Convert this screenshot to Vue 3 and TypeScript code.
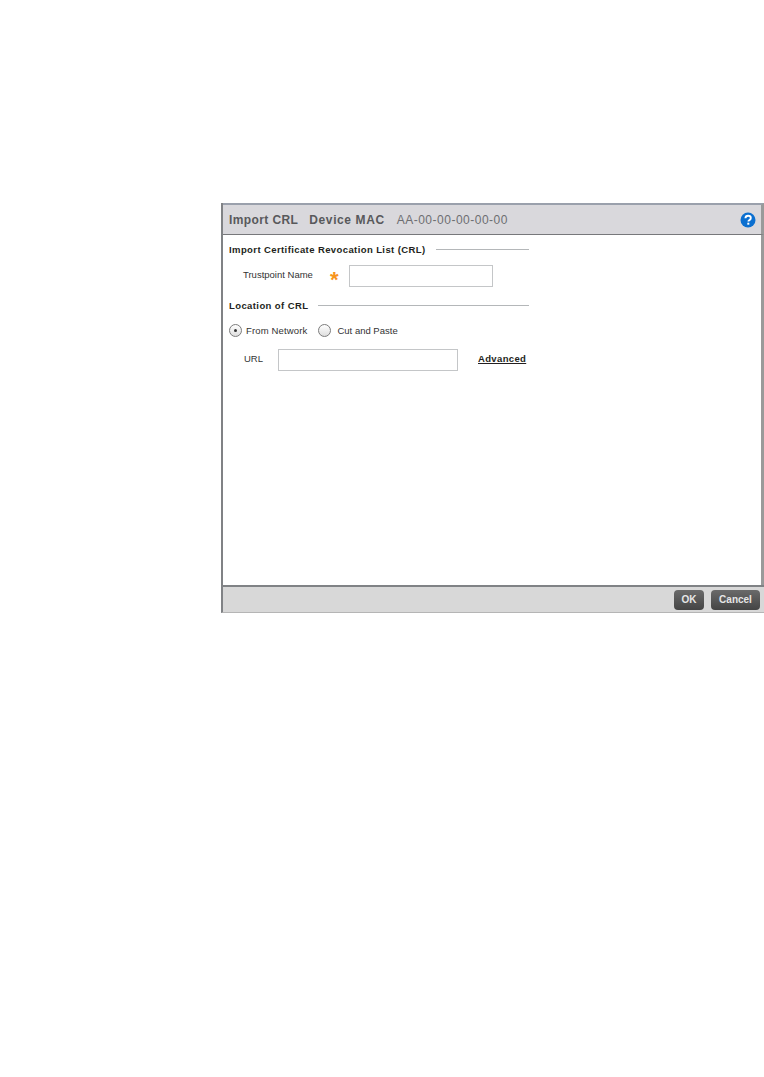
<template>
  <div class="page">
    <div class="dialog">
      <div class="dialog-header">
        <span class="title title-import">Import CRL</span>
        <span class="title title-device">Device MAC</span>
        <span class="mac">AA-00-00-00-00-00</span>
        <svg class="help" width="16" height="16" viewBox="0 0 16 16">
          <circle cx="8" cy="8" r="7.5" fill="#0b6fd0" />
          <path d="M5.4 6.2C5.5 4.6 6.6 3.7 8.1 3.7c1.6 0 2.7.9 2.7 2.2 0 1-.5 1.6-1.4 2.2-.7.4-1 .8-1 1.5" fill="none" stroke="#fff" stroke-width="1.9" />
          <rect x="7.3" y="10.7" width="2" height="2" fill="#fff" />
        </svg>
      </div>
      <div class="dialog-body">
        <div class="section-title section-first">
          <span>Import Certificate Revocation List (CRL)</span>
          <i class="rule"></i>
        </div>
        <div class="row row-trust">
          <label class="trust-label">Trustpoint Name</label>
          <span class="star">*</span>
          <input class="field field-trust" type="text" />
        </div>
        <div class="section-title section-second">
          <span>Location of CRL</span>
          <i class="rule"></i>
        </div>
        <div class="radios">
          <span class="radio checked"></span>
          <span class="radio-label label-network">From Network</span>
          <span class="radio"></span>
          <span class="radio-label">Cut and Paste</span>
        </div>
        <div class="row row-url">
          <label class="url-label">URL</label>
          <input class="field field-url" type="text" />
          <a class="advanced">Advanced</a>
        </div>
      </div>
      <div class="dialog-footer">
        <button class="btn btn-ok">OK</button>
        <button class="btn btn-cancel">Cancel</button>
      </div>
    </div>
  </div>
</template>

<script setup lang="ts">
</script>

<style>
html,
body {
  background: #fff;
}
</style>

<style scoped>
.page {
  width: 764px;
  height: 1077px;
  padding: 203px 0 0 221px;
  box-sizing: border-box;
  font-family: "Liberation Sans", Arial, sans-serif;
}

.dialog {
  width: 543px;
  height: 410px;
  box-sizing: border-box;
  display: flex;
  flex-direction: column;
  border-left: 2px solid #808285;
  border-bottom: 1px solid #b5b5b5;
}

.dialog-header {
  height: 32px;
  box-sizing: border-box;
  display: flex;
  align-items: center;
  padding: 0 5px 0 6px;
  background: #d9d8dc;
  border-top: 2px solid #9aa0ac;
  border-right: 3px solid #9a9a9a;
  border-bottom: 1px solid #77787b;
  color: #58595b;
  font-size: 12px;
}

.title {
  font-weight: bold;
  margin-right: 11px;
}

.title-import {
  letter-spacing: 0.4px;
}

.title-device {
  letter-spacing: 0.6px;
  margin-right: 12px;
}

.mac {
  color: #6d6e71;
  font-size: 12px;
  letter-spacing: 0.5px;
}

.help {
  margin-left: auto;
}

.dialog-body {
  flex: 1;
  background: #fff;
  padding: 0 6px;
  border-right: 3px solid #9a9a9a;
  font-size: 9.5px;
  color: #333;
}

.section-title {
  display: flex;
  align-items: center;
  width: 300px;
  font-weight: bold;
  color: #231f20;
  letter-spacing: 0.4px;
}

.section-first {
  margin-top: 9px;
}

.section-second {
  margin-top: 13px;
}

.rule {
  flex: 1;
  height: 1px;
  margin-left: 10px;
  background: #b4b7b9;
}

.row {
  display: flex;
  align-items: center;
}

.row-trust {
  margin-top: 10px;
  height: 22px;
}

.trust-label {
  width: 101px;
  padding: 0 0 3px 14px;
  box-sizing: border-box;
}

.star {
  width: 19px;
  height: 22px;
  color: #f7941d;
  font-size: 22px;
  font-weight: bold;
  line-height: 30px;
}

.field {
  height: 22px;
  box-sizing: border-box;
  border: 1px solid #c4c6c8;
  background: #fff;
  padding: 0;
  margin: 0;
}

.field-trust {
  width: 144px;
}

.radios {
  display: flex;
  align-items: center;
  margin-top: 12px;
  height: 14px;
}

.radio {
  width: 13px;
  height: 13px;
  box-sizing: border-box;
  border-radius: 50%;
  border: 1px solid #7c7c7c;
  background: linear-gradient(#fff, #dedede);
  display: flex;
  align-items: center;
  justify-content: center;
}

.radio.checked::after {
  content: "";
  width: 3px;
  height: 3px;
  border-radius: 50%;
  background: #333;
}

.radio-label {
  margin-left: 6px;
}

.label-network {
  margin-left: 4px;
  margin-right: 11px;
  letter-spacing: 0.15px;
}

.row-url {
  margin-top: 12px;
  height: 22px;
}

.url-label {
  width: 49px;
  padding: 0 0 3px 15px;
  box-sizing: border-box;
}

.field-url {
  width: 180px;
}

.advanced {
  margin-left: 20px;
  font-weight: bold;
  text-decoration: underline;
  color: #231f20;
  letter-spacing: 0.35px;
  padding-bottom: 3px;
}

.dialog-footer {
  height: 27px;
  box-sizing: border-box;
  display: flex;
  justify-content: flex-end;
  align-items: center;
  gap: 7px;
  padding-right: 4px;
  background: #d8d8d8;
  border-top: 2px solid #808285;
}

.btn {
  height: 20px;
  border: none;
  border-radius: 4px;
  background: linear-gradient(#6a6a6a, #444);
  color: #e6e6e6;
  font-family: inherit;
  font-size: 10px;
  font-weight: bold;
  padding: 0;
}

.btn-ok {
  width: 30px;
}

.btn-cancel {
  width: 49px;
}
</style>
